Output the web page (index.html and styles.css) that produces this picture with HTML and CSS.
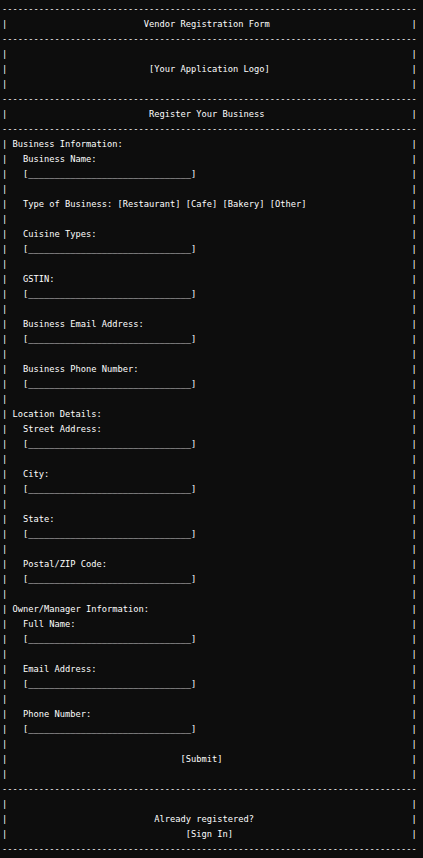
FILE: index.html
```html
<!DOCTYPE html>
<html lang="en">
<head>
<meta charset="utf-8">
<title>Vendor Registration Form</title>
<link rel="stylesheet" href="styles.css">
</head>
<body>
<main class="screen">
  <div class="rule">-------------------------------------------------------------------------------</div>
  <div class="row"><span>|</span><span class="cell c26">Vendor Registration Form</span><span>|</span></div>
  <div class="rule">-------------------------------------------------------------------------------</div>
  <div class="row"><span>|</span><span class="cell"></span><span>|</span></div>
  <div class="row"><span>|</span><span class="cell c27">[Your Application Logo]</span><span>|</span></div>
  <div class="row"><span>|</span><span class="cell"></span><span>|</span></div>
  <div class="rule">-------------------------------------------------------------------------------</div>
  <div class="row"><span>|</span><span class="cell c27">Register Your Business</span><span>|</span></div>
  <div class="rule">-------------------------------------------------------------------------------</div>

  <div class="row"><span>|</span><span class="cell i1">Business Information:</span><span>|</span></div>
  <div class="row"><span>|</span><span class="cell i3">Business Name:</span><span>|</span></div>
  <div class="row"><span>|</span><span class="cell i3">[_______________________________]</span><span>|</span></div>
  <div class="row"><span>|</span><span class="cell"></span><span>|</span></div>
  <div class="row"><span>|</span><span class="cell i3">Type of Business: [Restaurant] [Cafe] [Bakery] [Other]</span><span>|</span></div>
  <div class="row"><span>|</span><span class="cell"></span><span>|</span></div>
  <div class="row"><span>|</span><span class="cell i3">Cuisine Types:</span><span>|</span></div>
  <div class="row"><span>|</span><span class="cell i3">[_______________________________]</span><span>|</span></div>
  <div class="row"><span>|</span><span class="cell"></span><span>|</span></div>
  <div class="row"><span>|</span><span class="cell i3">GSTIN:</span><span>|</span></div>
  <div class="row"><span>|</span><span class="cell i3">[_______________________________]</span><span>|</span></div>
  <div class="row"><span>|</span><span class="cell"></span><span>|</span></div>
  <div class="row"><span>|</span><span class="cell i3">Business Email Address:</span><span>|</span></div>
  <div class="row"><span>|</span><span class="cell i3">[_______________________________]</span><span>|</span></div>
  <div class="row"><span>|</span><span class="cell"></span><span>|</span></div>
  <div class="row"><span>|</span><span class="cell i3">Business Phone Number:</span><span>|</span></div>
  <div class="row"><span>|</span><span class="cell i3">[_______________________________]</span><span>|</span></div>
  <div class="row"><span>|</span><span class="cell"></span><span>|</span></div>

  <div class="row"><span>|</span><span class="cell i1">Location Details:</span><span>|</span></div>
  <div class="row"><span>|</span><span class="cell i3">Street Address:</span><span>|</span></div>
  <div class="row"><span>|</span><span class="cell i3">[_______________________________]</span><span>|</span></div>
  <div class="row"><span>|</span><span class="cell"></span><span>|</span></div>
  <div class="row"><span>|</span><span class="cell i3">City:</span><span>|</span></div>
  <div class="row"><span>|</span><span class="cell i3">[_______________________________]</span><span>|</span></div>
  <div class="row"><span>|</span><span class="cell"></span><span>|</span></div>
  <div class="row"><span>|</span><span class="cell i3">State:</span><span>|</span></div>
  <div class="row"><span>|</span><span class="cell i3">[_______________________________]</span><span>|</span></div>
  <div class="row"><span>|</span><span class="cell"></span><span>|</span></div>
  <div class="row"><span>|</span><span class="cell i3">Postal/ZIP Code:</span><span>|</span></div>
  <div class="row"><span>|</span><span class="cell i3">[_______________________________]</span><span>|</span></div>
  <div class="row"><span>|</span><span class="cell"></span><span>|</span></div>

  <div class="row"><span>|</span><span class="cell i1">Owner/Manager Information:</span><span>|</span></div>
  <div class="row"><span>|</span><span class="cell i3">Full Name:</span><span>|</span></div>
  <div class="row"><span>|</span><span class="cell i3">[_______________________________]</span><span>|</span></div>
  <div class="row"><span>|</span><span class="cell"></span><span>|</span></div>
  <div class="row"><span>|</span><span class="cell i3">Email Address:</span><span>|</span></div>
  <div class="row"><span>|</span><span class="cell i3">[_______________________________]</span><span>|</span></div>
  <div class="row"><span>|</span><span class="cell"></span><span>|</span></div>
  <div class="row"><span>|</span><span class="cell i3">Phone Number:</span><span>|</span></div>
  <div class="row"><span>|</span><span class="cell i3">[_______________________________]</span><span>|</span></div>
  <div class="row"><span>|</span><span class="cell"></span><span>|</span></div>
  <div class="row"><span>|</span><span class="cell c33">[Submit]</span><span>|</span></div>
  <div class="row"><span>|</span><span class="cell"></span><span>|</span></div>
  <div class="rule">-------------------------------------------------------------------------------</div>
  <div class="row"><span>|</span><span class="cell"></span><span>|</span></div>
  <div class="row"><span>|</span><span class="cell c28">Already registered?</span><span>|</span></div>
  <div class="row"><span>|</span><span class="cell c34">[Sign In]</span><span>|</span></div>
  <div class="rule">-------------------------------------------------------------------------------</div>
</main>
</body>
</html>
```

FILE: styles.css
```css
html, body {
  margin: 0;
  padding: 0;
  background: #0d0d0d;
}

.screen {
  padding: 2px 0 0 2px;
  font-family: "DejaVu Sans Mono", "Liberation Mono", monospace;
  font-size: 8.73px;
  line-height: 15px;
  color: #ffffff;
}

.rule {
  width: 79ch;
  overflow: hidden;
  white-space: pre;
}

.row {
  display: grid;
  grid-template-columns: 1ch 77ch 1ch;
  width: 79ch;
  height: 15px;
}

.cell {
  white-space: pre;
}

.i1 { padding-left: 1ch; }
.i3 { padding-left: 3ch; }
.c26 { padding-left: 26ch; }
.c27 { padding-left: 27ch; }
.c28 { padding-left: 28ch; }
.c33 { padding-left: 33ch; }
.c34 { padding-left: 34ch; }
```
